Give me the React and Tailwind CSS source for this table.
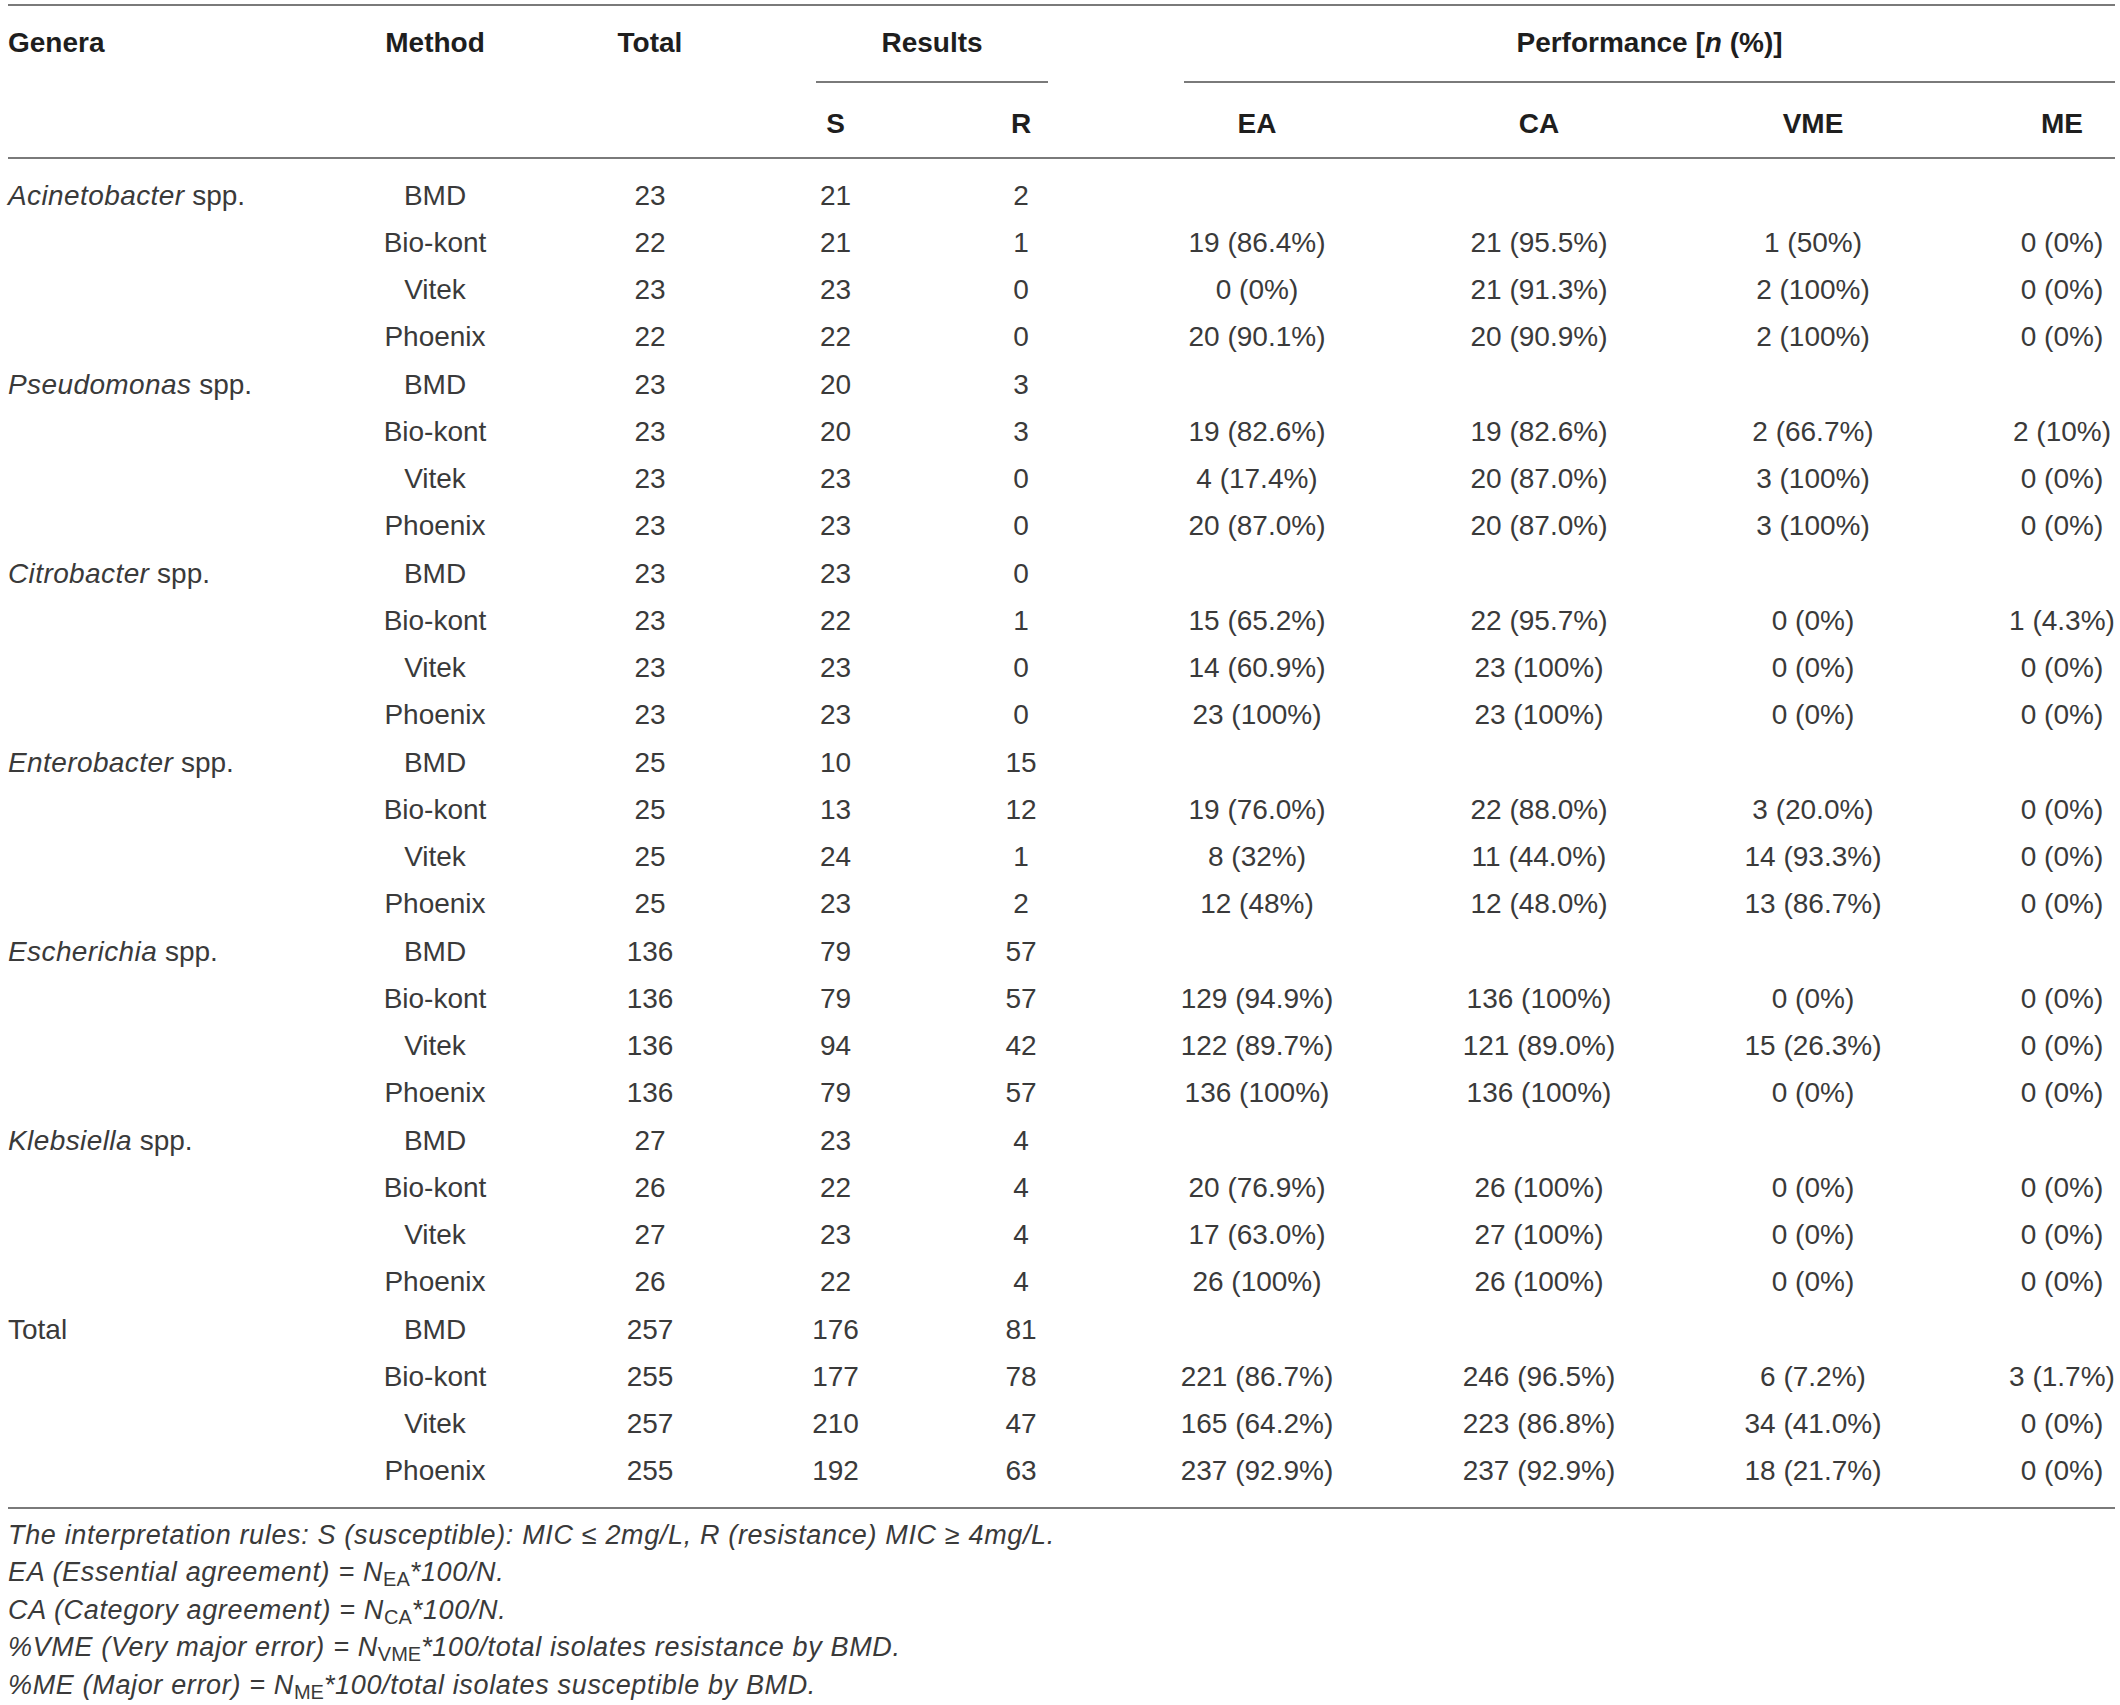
import React from "react";

const COLS = "grid grid-cols-[320px_214px_201px_185px_211px_259px_278px_261px_178px]";
const CELL = [
  "text-left",
  "text-center",
  "text-center pl-[15px]",
  "text-center",
  "text-center pr-[25px]",
  "text-center pr-[23px]",
  "text-center pl-[4px]",
  "text-center pl-[13px]",
  "text-center pl-[72px]",
];

const groups = [
  {
    name: "Acinetobacter",
    rows: [
      ["BMD", "23", "21", "2", "", "", "", ""],
      ["Bio-kont", "22", "21", "1", "19 (86.4%)", "21 (95.5%)", "1 (50%)", "0 (0%)"],
      ["Vitek", "23", "23", "0", "0 (0%)", "21 (91.3%)", "2 (100%)", "0 (0%)"],
      ["Phoenix", "22", "22", "0", "20 (90.1%)", "20 (90.9%)", "2 (100%)", "0 (0%)"],
    ],
  },
  {
    name: "Pseudomonas",
    rows: [
      ["BMD", "23", "20", "3", "", "", "", ""],
      ["Bio-kont", "23", "20", "3", "19 (82.6%)", "19 (82.6%)", "2 (66.7%)", "2 (10%)"],
      ["Vitek", "23", "23", "0", "4 (17.4%)", "20 (87.0%)", "3 (100%)", "0 (0%)"],
      ["Phoenix", "23", "23", "0", "20 (87.0%)", "20 (87.0%)", "3 (100%)", "0 (0%)"],
    ],
  },
  {
    name: "Citrobacter",
    rows: [
      ["BMD", "23", "23", "0", "", "", "", ""],
      ["Bio-kont", "23", "22", "1", "15 (65.2%)", "22 (95.7%)", "0 (0%)", "1 (4.3%)"],
      ["Vitek", "23", "23", "0", "14 (60.9%)", "23 (100%)", "0 (0%)", "0 (0%)"],
      ["Phoenix", "23", "23", "0", "23 (100%)", "23 (100%)", "0 (0%)", "0 (0%)"],
    ],
  },
  {
    name: "Enterobacter",
    rows: [
      ["BMD", "25", "10", "15", "", "", "", ""],
      ["Bio-kont", "25", "13", "12", "19 (76.0%)", "22 (88.0%)", "3 (20.0%)", "0 (0%)"],
      ["Vitek", "25", "24", "1", "8 (32%)", "11 (44.0%)", "14 (93.3%)", "0 (0%)"],
      ["Phoenix", "25", "23", "2", "12 (48%)", "12 (48.0%)", "13 (86.7%)", "0 (0%)"],
    ],
  },
  {
    name: "Escherichia",
    rows: [
      ["BMD", "136", "79", "57", "", "", "", ""],
      ["Bio-kont", "136", "79", "57", "129 (94.9%)", "136 (100%)", "0 (0%)", "0 (0%)"],
      ["Vitek", "136", "94", "42", "122 (89.7%)", "121 (89.0%)", "15 (26.3%)", "0 (0%)"],
      ["Phoenix", "136", "79", "57", "136 (100%)", "136 (100%)", "0 (0%)", "0 (0%)"],
    ],
  },
  {
    name: "Klebsiella",
    rows: [
      ["BMD", "27", "23", "4", "", "", "", ""],
      ["Bio-kont", "26", "22", "4", "20 (76.9%)", "26 (100%)", "0 (0%)", "0 (0%)"],
      ["Vitek", "27", "23", "4", "17 (63.0%)", "27 (100%)", "0 (0%)", "0 (0%)"],
      ["Phoenix", "26", "22", "4", "26 (100%)", "26 (100%)", "0 (0%)", "0 (0%)"],
    ],
  },
  {
    name: null,
    rows: [
      ["BMD", "257", "176", "81", "", "", "", ""],
      ["Bio-kont", "255", "177", "78", "221 (86.7%)", "246 (96.5%)", "6 (7.2%)", "3 (1.7%)"],
      ["Vitek", "257", "210", "47", "165 (64.2%)", "223 (86.8%)", "34 (41.0%)", "0 (0%)"],
      ["Phoenix", "255", "192", "63", "237 (92.9%)", "237 (92.9%)", "18 (21.7%)", "0 (0%)"],
    ],
  },
];

function Sub({ children }) {
  return <sub className="not-italic text-[20px] tracking-normal">{children}</sub>;
}

export default function App() {
  return (
    <div className="bg-white min-h-[1705px] w-[2120px] font-['Liberation_Sans',Arial,sans-serif] text-[#3a3a3a]">
      <div className="ml-[8px] w-[2107px] pt-[4px]">
        {/* Header */}
        <div className="border-t-2 border-b-2 border-[#7a7a7a] text-[28px] font-bold text-[#1e1e1e] leading-[47px]">
          <div className={COLS}>
            <div className={"h-[77px] pt-[13px] " + CELL[0]}>Genera</div>
            <div className={"h-[77px] pt-[13px] " + CELL[1]}>Method</div>
            <div className={"h-[77px] pt-[13px] " + CELL[2]}>Total</div>
            <div className="col-span-2 h-[77px]">
              <div className="ml-[73px] mr-[91px] h-[77px] pt-[13px] border-b-2 border-[#7a7a7a] text-center">
                Results
              </div>
            </div>
            <div className="col-span-4 h-[77px]">
              <div className="ml-[45px] h-[77px] pt-[13px] border-b-2 border-[#7a7a7a] text-center">
                Performance [<span className="italic">n</span> (%)]
              </div>
            </div>
          </div>
          <div className={COLS}>
            <div className={"h-[74px] pt-[17px] " + CELL[0]}></div>
            <div className={"h-[74px] pt-[17px] " + CELL[1]}></div>
            <div className={"h-[74px] pt-[17px] " + CELL[2]}></div>
            <div className={"h-[74px] pt-[17px] " + CELL[3]}>S</div>
            <div className={"h-[74px] pt-[17px] " + CELL[4]}>R</div>
            <div className={"h-[74px] pt-[17px] " + CELL[5]}>EA</div>
            <div className={"h-[74px] pt-[17px] " + CELL[6]}>CA</div>
            <div className={"h-[74px] pt-[17px] " + CELL[7]}>VME</div>
            <div className={"h-[74px] pt-[17px] " + CELL[8]}>ME</div>
          </div>
        </div>

        {/* Body */}
        <div className="pt-[12.5px] pb-[12.5px] border-b-2 border-[#7a7a7a] text-[28px] leading-[47.25px]">
          {groups.map((g, gi) =>
            g.rows.map((r, ri) => (
              <div key={gi + "-" + ri} className={COLS + " h-[47.25px] whitespace-nowrap"}>
                <div className={CELL[0]}>
                  {ri === 0 ? (
                    g.name ? (
                      <>
                        <span className="italic tracking-[0.4px]">{g.name}</span> spp.
                      </>
                    ) : (
                      "Total"
                    )
                  ) : null}
                </div>
                {r.map((v, ci) => (
                  <div key={ci} className={CELL[ci + 1]}>
                    {v}
                  </div>
                ))}
              </div>
            ))
          )}
        </div>

        {/* Footnotes */}
        <div className="pt-[7.5px] text-[27px] italic tracking-[0.65px] leading-[37.5px] text-[#3a3a3a] whitespace-nowrap">
          <p>
            The interpretation rules: S (susceptible): MIC ≤ 2mg/L, R (resistance) MIC ≥ 4mg/L.
          </p>
          <p>
            EA (Essential agreement) = N<Sub>EA</Sub>*100/N.
          </p>
          <p>
            CA (Category agreement) = N<Sub>CA</Sub>*100/N.
          </p>
          <p>
            %VME (Very major error) = N<Sub>VME</Sub>*100/total isolates resistance by BMD.
          </p>
          <p>
            %ME (Major error) = N<Sub>ME</Sub>*100/total isolates susceptible by BMD.
          </p>
        </div>
      </div>
    </div>
  );
}
